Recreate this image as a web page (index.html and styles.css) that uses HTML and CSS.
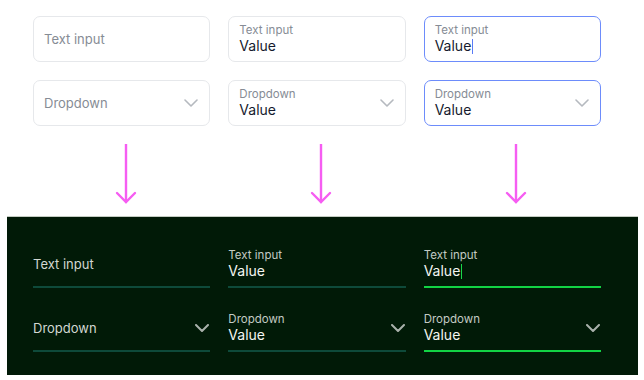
FILE: index.html
```html
<!DOCTYPE html>
<html lang="en">
<head>
    <meta charset="UTF-8">
    <meta name="viewport" content="width=device-width, initial-scale=1.0">
    <title>Input states</title>
    <link rel="stylesheet" href="styles.css">
</head>
<body>

    <section class="grid light">
        <div class="field">
            <span class="placeholder">Text input</span>
        </div>
        <div class="field">
            <div class="text">
                <span class="label">Text input</span>
                <span class="value">Value</span>
            </div>
        </div>
        <div class="field focus">
            <div class="text">
                <span class="label">Text input</span>
                <span class="value">Value<i class="caret"></i></span>
            </div>
        </div>

        <div class="field">
            <span class="placeholder">Dropdown</span>
            <svg class="chevron" viewBox="0 0 14 8"><polyline points="1,1 7,7 13,1"/></svg>
        </div>
        <div class="field">
            <div class="text">
                <span class="label">Dropdown</span>
                <span class="value">Value</span>
            </div>
            <svg class="chevron" viewBox="0 0 14 8"><polyline points="1,1 7,7 13,1"/></svg>
        </div>
        <div class="field focus">
            <div class="text">
                <span class="label">Dropdown</span>
                <span class="value">Value</span>
            </div>
            <svg class="chevron" viewBox="0 0 14 8"><polyline points="1,1 7,7 13,1"/></svg>
        </div>
    </section>

    <div class="grid arrows">
        <svg class="arrow" viewBox="0 0 22 60"><line x1="11" y1="0" x2="11" y2="58"/><polyline points="2,49 11,58 20,49"/></svg>
        <svg class="arrow" viewBox="0 0 22 60"><line x1="11" y1="0" x2="11" y2="58"/><polyline points="2,49 11,58 20,49"/></svg>
        <svg class="arrow" viewBox="0 0 22 60"><line x1="11" y1="0" x2="11" y2="58"/><polyline points="2,49 11,58 20,49"/></svg>
    </div>

    <section class="dark">
        <div class="grid">
            <div class="field">
                <span class="placeholder">Text input</span>
            </div>
            <div class="field">
                <div class="text">
                    <span class="label">Text input</span>
                    <span class="value">Value</span>
                </div>
            </div>
            <div class="field focus">
                <div class="text">
                    <span class="label">Text input</span>
                    <span class="value">Value<i class="caret"></i></span>
                </div>
            </div>

            <div class="field">
                <span class="placeholder">Dropdown</span>
                <svg class="chevron" viewBox="0 0 14 8"><polyline points="1,1 7,7 13,1"/></svg>
            </div>
            <div class="field">
                <div class="text">
                    <span class="label">Dropdown</span>
                    <span class="value">Value</span>
                </div>
                <svg class="chevron" viewBox="0 0 14 8"><polyline points="1,1 7,7 13,1"/></svg>
            </div>
            <div class="field focus">
                <div class="text">
                    <span class="label">Dropdown</span>
                    <span class="value">Value</span>
                </div>
                <svg class="chevron" viewBox="0 0 14 8"><polyline points="1,1 7,7 13,1"/></svg>
            </div>
        </div>
    </section>

</body>
</html>
```

FILE: styles.css
```css
*{
    margin: 0;
    padding: 0;
    box-sizing: border-box;
}
html{
    font-family: Inter, "Noto Sans", sans-serif;
}
body{
    width: 644px;
    height: 380px;
    background: #fff;
    overflow: hidden;
}
.grid{
    display: grid;
    grid-template-columns: repeat(3, 177.33px);
    column-gap: 18px;
    row-gap: 18px;
}
.light{
    padding: 16px 0 0 33px;
}

/* field */
.field{
    height: 46px;
    display: flex;
    align-items: center;
    justify-content: space-between;
}
.text{
    display: flex;
    flex-direction: column;
}
.label{
    font-size: 11.5px;
    line-height: 14px;
}
.value{
    font-size: 14px;
    line-height: 18px;
    display: flex;
    align-items: center;
}
.placeholder{
    font-size: 13px;
}
.caret{
    display: block;
    width: 1px;
    height: 15px;
    margin-left: 1px;
}
.chevron{
    width: 14px;
    height: 8px;
    fill: none;
    stroke-width: 1.6;
    stroke-linecap: round;
    stroke-linejoin: round;
}

/* light theme */
.light .field{
    border: 1px solid #e6e8eb;
    border-radius: 7px;
    padding: 0 11px 0 10px;
}
.light .field.focus{
    border-color: #6d8cfb;
}
.light .label,
.light .placeholder{
    color: #868c95;
}
.light .value{
    color: #151a2e;
}
.light .caret{
    background: #5a7bf6;
}
.light .chevron{
    stroke: #b5b9bf;
}

/* arrows */
.arrows{
    padding: 18px 0 0 37px;
    margin-bottom: 12px;
}
.arrow{
    justify-self: center;
    width: 22px;
    height: 60px;
    fill: none;
    stroke: #f65df2;
    stroke-width: 2.4;
    stroke-linecap: round;
}

/* dark theme */
.dark{
    margin-left: 7px;
    width: 631px;
    height: 159px;
    background: #011a07;
    border-top: 1px solid #c4ccc2;
    padding: 25px 0 0 26px;
}
.dark .field{
    border-bottom: 2px solid #0e4a3a;
    padding-right: 1px;
}
.dark .field.focus{
    border-bottom-color: #12d344;
}
.dark .label{
    color: #c3cbc4;
}
.dark .placeholder{
    color: #d2d8d2;
}
.dark .value{
    color: #f4f6f2;
}
.dark .caret{
    background: #19d84a;
}
.dark .chevron{
    stroke: #a9b1ab;
    stroke-width: 2;
}
```
